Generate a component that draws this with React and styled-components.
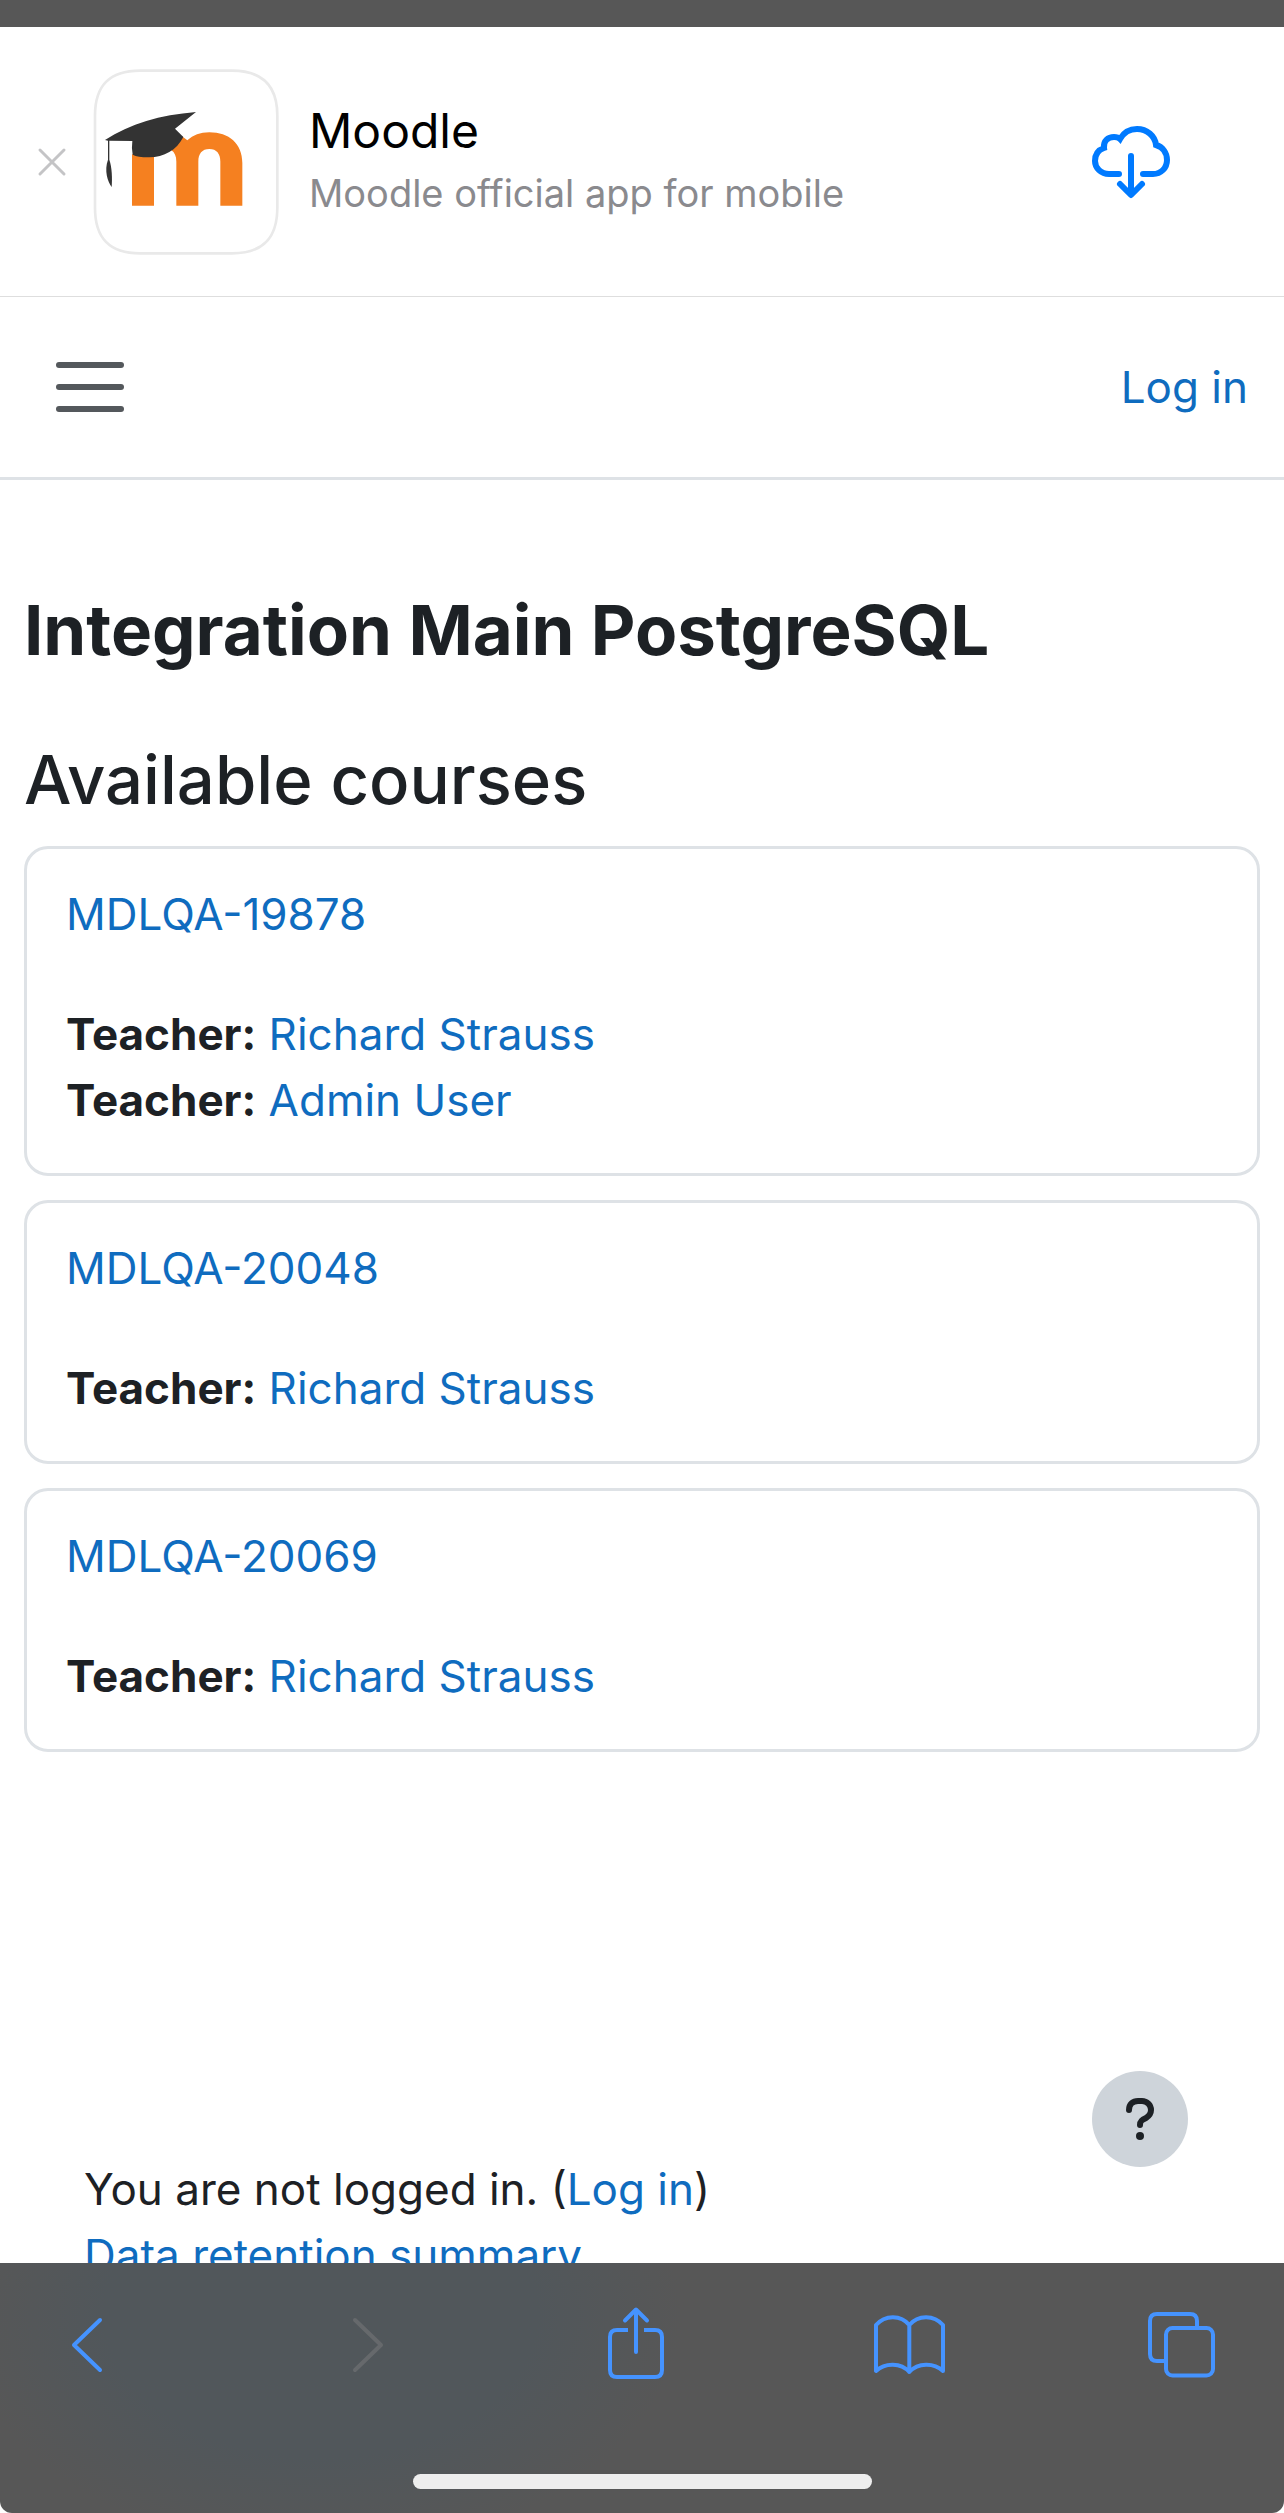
import React from "react";
import styled, { createGlobalStyle, css } from "styled-components";

const courses = [
  { name: "MDLQA-19878", teachers: ["Richard Strauss", "Admin User"] },
  { name: "MDLQA-20048", teachers: ["Richard Strauss"] },
  { name: "MDLQA-20069", teachers: ["Richard Strauss"] },
];

const MoodleLogo = () => (
  <svg width="186" height="186" viewBox="39 56 558 558" aria-hidden="true">
    <path
      d="M180 61H456C548 61 592 106 592 196V472C592 564 548 609 456 609H180C88 609 45 564 45 472V196C45 106 88 61 180 61Z"
      fill="#fff"
      stroke="#e9e9e9"
      strokeWidth="8"
    />
    <path
      d="M156 312H222V466H156ZM274 300L306 258L322 270C340 254 360 246 388 246C447 246 487 280 487 338V466H421V334C421 310 410 296 388 296C366 296 355 310 355 334V466H289V334C289 318 284 306 274 300Z"
      fill="#f58020"
    />
    <path
      d="M75 269C150 220 240 194 348 185L285 235L310 260C290 300 250 322 205 321C184 321 168 319 158 313Q154 295 157 272L88 271L88 328C96 350 97 385 95 410C83 394 72 360 84 328L84 271Z"
      fill="#333"
    />
  </svg>
);

const CloudDownloadIcon = () => (
  <svg width="96" height="96" viewBox="0 0 96 96" aria-hidden="true">
    <g fill="none" stroke="#007aff" strokeWidth="6" strokeLinecap="round">
      <path d="M36 60H26C18 60 12 54 12 47C12 41 15 36 21 34C20 27 25 23 31 23C34 23 36 24 37 25C41 18 47 15 54 15C64 15 72 22 73 31C80 33 84 39 84 46C84 54 78 60 70 60H60" />
      <path d="M48 42V80M37 70L48 81L59 70" strokeLinejoin="round" />
    </g>
  </svg>
);

const BackIcon = () => (
  <ToolIcon>
    <path d="M62 23L36 48L62 73" />
  </ToolIcon>
);

const ForwardIcon = () => (
  <ToolIcon>
    <path d="M43 23L69 48L43 73" />
  </ToolIcon>
);

const ShareIcon = () => (
  <ToolIcon>
    <path d="M50 13V55M39 23.500L50 12.500L61 23.500" />
    <path
      d="M42 33H31Q24 33 24 40V73Q24 80 31 80H69Q76 80 76 73V40Q76 33 69 33H58"
      strokeLinecap="butt"
    />
  </ToolIcon>
);

const BookIcon = () => (
  <ToolIcon>
    <path d="M16 74V28C25 17.500 41 17.500 49.300 28C58 17.500 74 17.500 83 28V74C74 65.500 58 65.500 49.300 75C41 65.500 25 65.500 16 74ZM49.300 28V75" />
  </ToolIcon>
);

const TabsIcon = () => (
  <ToolIcon>
    <rect x="32" y="31" width="47" height="47.500" rx="6.500" />
    <path
      d="M63 29V24Q63 17 56 17H23Q16 17 16 24V57Q16 64 23 64H30"
      strokeLinecap="butt"
    />
  </ToolIcon>
);

const QuestionIcon = () => (
  <svg width="28" height="42" viewBox="0 0 28 42" aria-hidden="true">
    <path
      d="M3 12C3 6 7 3 12 3H16C21 3 25 7 25 12C25 16 23 18 20 20C16 22 14 23 14 27"
      fill="none"
      stroke="#1d2125"
      strokeWidth="6"
      strokeLinecap="round"
    />
    <circle cx="14" cy="38" r="4" fill="#1d2125" />
  </svg>
);

const CourseCard = ({ course }) => (
  <Card>
    <CourseName>
      <Link href="#course">{course.name}</Link>
    </CourseName>
    <TeacherList>
      {course.teachers.map((teacher) => (
        <li key={teacher}>
          <b>Teacher:</b> <Link href="#profile">{teacher}</Link>
        </li>
      ))}
    </TeacherList>
  </Card>
);

const App = () => (
  <Screen>
    <GlobalStyle />
    <StatusStrip />
    <Page>
      <AppBanner>
        <CloseButton aria-label="Close">
          <svg width="30" height="30" viewBox="0 0 30 30" aria-hidden="true">
            <path
              d="M3 3L27 27M27 3L3 27"
              stroke="#c4c4c6"
              strokeWidth="3"
              strokeLinecap="round"
            />
          </svg>
        </CloseButton>
        <MoodleLogo />
        <BannerText>
          <BannerTitle>Moodle</BannerTitle>
          <BannerSubtitle>Moodle official app for mobile</BannerSubtitle>
        </BannerText>
        <IconButton aria-label="Download">
          <CloudDownloadIcon />
        </IconButton>
      </AppBanner>
      <Navbar>
        <MenuButton aria-label="Side panel">
          <span />
          <span />
          <span />
        </MenuButton>
        <Link href="#login">Log in</Link>
      </Navbar>
      <Main>
        <SiteTitle>Integration Main PostgreSQL</SiteTitle>
        <SectionTitle>Available courses</SectionTitle>
        <CourseList>
          {courses.map((course) => (
            <CourseCard key={course.name} course={course} />
          ))}
        </CourseList>
      </Main>
      <Footer>
        <div>
          You are not logged in. (<Link href="#login">Log in</Link>)
        </div>
        <Link href="#summary">Data retention summary</Link>
      </Footer>
      <HelpButton aria-label="Help">
        <QuestionIcon />
      </HelpButton>
    </Page>
    <BrowserBar>
      <Tools>
        <IconButton aria-label="Back">
          <BackIcon />
        </IconButton>
        <IconButton aria-label="Forward" disabled>
          <ForwardIcon />
        </IconButton>
        <IconButton aria-label="Share">
          <ShareIcon />
        </IconButton>
        <IconButton aria-label="Bookmarks">
          <BookIcon />
        </IconButton>
        <IconButton aria-label="Tabs">
          <TabsIcon />
        </IconButton>
      </Tools>
      <HomeIndicator />
    </BrowserBar>
  </Screen>
);

export default App;

const GlobalStyle = createGlobalStyle`
  * {
    box-sizing: border-box;
  }

  body {
    margin: 0;
    background: #fff;
    color: #1d2125;
    font-family: Inter, "Liberation Sans", sans-serif;
    font-size: 44px;
    line-height: 66px;
  }
`;

const buttonReset = css`
  padding: 0;
  border: 0;
  background: none;
  cursor: pointer;
`;

const Screen = styled.div`
  display: flex;
  flex-direction: column;
  height: 100vh;
`;

const StatusStrip = styled.div`
  flex: none;
  height: 27px;
  background: #575757;
`;

const Page = styled.div`
  position: relative;
  display: flex;
  flex: 1;
  flex-direction: column;
  min-height: 0;
  overflow: hidden;
`;

const AppBanner = styled.section`
  display: flex;
  flex: none;
  align-items: center;
  height: 270px;
  padding: 0 105px 0 37px;
  border-bottom: 1px solid #dedede;
`;

const CloseButton = styled.button`
  ${buttonReset};
  display: flex;
  margin-right: 26px;
`;

const BannerText = styled.div`
  flex: 1;
  margin-left: 30px;
`;

const BannerTitle = styled.div`
  color: #000;
  font-size: 48px;
  line-height: 62px;
`;

const BannerSubtitle = styled.div`
  color: #8a8a8e;
  font-size: 38px;
  line-height: 62px;
`;

const IconButton = styled.button`
  ${buttonReset};
  display: flex;
  color: #4593ff;

  &:disabled {
    color: #66696c;
    cursor: default;
  }
`;

const ToolIcon = styled.svg.attrs({
  width: 96,
  height: 96,
  viewBox: "0 0 96 96",
  "aria-hidden": true,
})`
  fill: none;
  stroke: currentColor;
  stroke-width: 4px;
  stroke-linecap: round;
  stroke-linejoin: round;
`;

const Link = styled.a`
  color: #0f6cbf;
  text-decoration: none;
`;

const Navbar = styled.nav`
  display: flex;
  flex: none;
  align-items: center;
  justify-content: space-between;
  height: 183px;
  padding: 0 36px 0 56px;
  border-bottom: 3px solid #dee2e6;
`;

const MenuButton = styled.button`
  ${buttonReset};
  display: flex;
  flex-direction: column;
  gap: 16px;

  span {
    width: 68px;
    height: 6px;
    border-radius: 3px;
    background: #54585c;
  }
`;

const Main = styled.main`
  flex: none;
  padding: 108px 24px 0;
`;

const SiteTitle = styled.h1`
  margin: 0 0 66px;
  font-size: 69px;
  font-weight: 700;
  line-height: 84px;
`;

const SectionTitle = styled.h2`
  margin: 0 0 24px;
  font-size: 67px;
  font-weight: 500;
  line-height: 84px;
`;

const CourseList = styled.div`
  display: flex;
  flex-direction: column;
  gap: 24px;
`;

const Card = styled.article`
  padding: 32px 39px 40px;
  border: 3px solid #dee2e6;
  border-radius: 24px;
`;

const CourseName = styled.div`
  margin-bottom: 54px;
`;

const TeacherList = styled.ul`
  margin: 0;
  padding: 0;
  list-style: none;
`;

const Footer = styled.footer`
  flex: none;
  margin-top: 404px;
  padding: 0 84px;
`;

const HelpButton = styled.button`
  ${buttonReset};
  position: absolute;
  right: 96px;
  bottom: 96px;
  display: flex;
  align-items: center;
  justify-content: center;
  width: 96px;
  height: 96px;
  border-radius: 50%;
  background: #ced4da;
`;

const BrowserBar = styled.div`
  flex: none;
  display: flex;
  flex-direction: column;
  justify-content: space-between;
  align-items: center;
  height: 250px;
  padding: 34px 0 24px;
  border-radius: 0 0 12px 12px;
  background: radial-gradient(
      ellipse 360px 240px at 25% 20%,
      #51575b 60%,
      transparent 100%
    )
    #575757;
`;

const Tools = styled.div`
  display: flex;
  align-self: stretch;
  justify-content: space-between;
  padding: 0 54px 0 38px;
`;

const HomeIndicator = styled.div`
  width: 459px;
  height: 15px;
  border-radius: 8px;
  background: #eee;
`;
